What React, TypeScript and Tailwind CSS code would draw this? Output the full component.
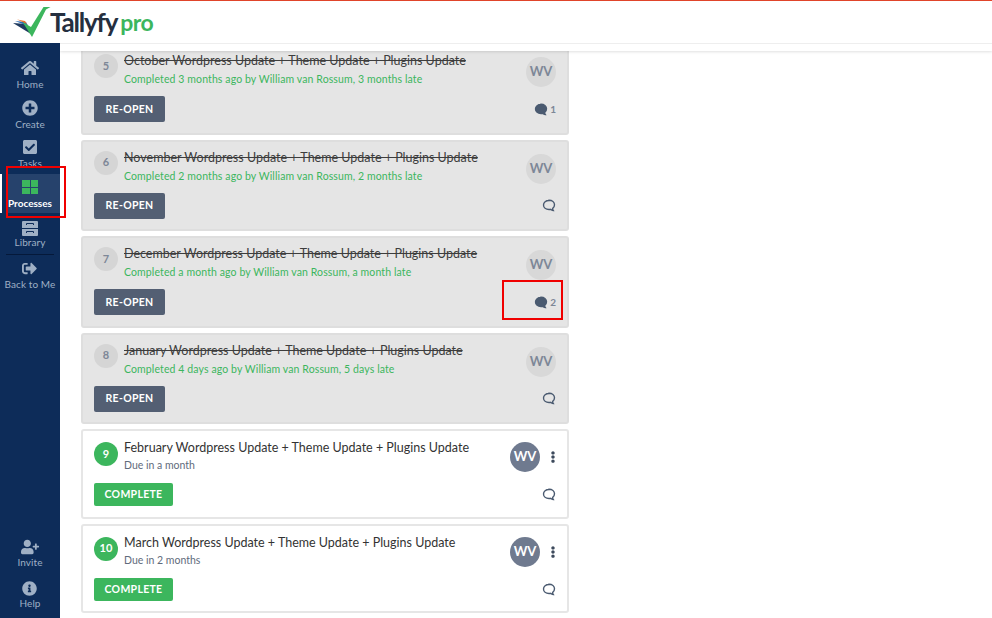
import React from 'react';
import { FaHome, FaPlusCircle, FaCheckSquare, FaSignOutAlt, FaUserPlus, FaInfoCircle, FaEllipsisV } from 'react-icons/fa';

interface Task {
  num: number;
  title: string;
  status: string;
  comments?: number;
}

const doneTasks: Task[] = [
  { num: 5, title: 'October Wordpress Update + Theme Update + Plugins Update', status: 'Completed 3 months ago by William van Rossum, 3 months late', comments: 1 },
  { num: 6, title: 'November Wordpress Update + Theme Update + Plugins Update', status: 'Completed 2 months ago by William van Rossum, 2 months late' },
  { num: 7, title: 'December Wordpress Update + Theme Update + Plugins Update', status: 'Completed a month ago by William van Rossum, a month late', comments: 2 },
  { num: 8, title: 'January Wordpress Update + Theme Update + Plugins Update', status: 'Completed 4 days ago by William van Rossum, 5 days late' },
];

const openTasks: Task[] = [
  { num: 9, title: 'February Wordpress Update + Theme Update + Plugins Update', status: 'Due in a month' },
  { num: 10, title: 'March Wordpress Update + Theme Update + Plugins Update', status: 'Due in 2 months' },
];

function Logo() {
  return (
    <svg width="40" height="34" viewBox="12 5 40 34" className="shrink-0">
      <path d="M13 23 L27 24 L31 34 Z" fill="#1f3a5f" />
      <path d="M15 21 L26 22 L28 26 Z" fill="#2d6cb5" />
      <path d="M17 19.500 L25 21 L27 24 Z" fill="#e8702a" />
      <path d="M22.500 22 L31 27 L43.500 7 L50.500 7 L46 9.500 L32 37 Z" fill="#3cb65d" />
    </svg>
  );
}

function CommentIcon({ filled }: { filled: boolean }) {
  return (
    <svg width="14" height="13" viewBox="0 0 14 13">
      <path
        d="M7 1.500C3.900 1.500 1.500 3.400 1.500 6s2.400 4.500 5.500 4.500c.8 0 1.200 0 1.700-.2.6.6 1.400 1.100 2.500 1.200-.4-.6-.6-1.300-.5-2.200 1.200-.8 1.800-2 1.800-3.500 0-2.600-2.400-4.500-5.500-4.500Z"
        fill={filled ? '#4a5a70' : 'none'}
        stroke="#4a5a70"
        strokeWidth="1.400"
      />
    </svg>
  );
}

function DoneCard({ task }: { task: Task }) {
  return (
    <div className="w-[488px] h-[91.5px] shrink-0 rounded-[3px] border-2 border-[#dedede] bg-[#e5e5e5] pl-[11px] pr-[11px] pt-[9px]">
      <div className="flex items-start">
        <div className="w-6 h-6 shrink-0 rounded-full bg-[#d5d5d5] text-[#7d8797] flex items-center justify-center text-[11px] font-bold">
          {task.num}
        </div>
        <div className="ml-[6px] flex-1 min-w-0 -mt-[1px]">
          <div className="text-[12.5px] leading-[16px] whitespace-nowrap text-[#3d3d3d] line-through">{task.title}</div>
          <div className="mt-[3px] text-[10.5px] leading-[14px] tracking-[0.11px] whitespace-nowrap text-[#3cb65d]">{task.status}</div>
        </div>
        <div className="mt-[3px] w-[30px] h-[30px] rounded-full bg-[#d8d8d8] text-[#7d8797] flex items-center justify-center text-[13px] font-bold">
          WV
        </div>
      </div>
      <div className="mt-[9px] flex items-center justify-between">
        <button className="w-[71px] h-[26px] pt-[1px] rounded-[2px] bg-[#535f73] text-white text-[10.5px] font-bold tracking-[0.3px]">RE-OPEN</button>
        <div className="flex items-center gap-[2px]">
          <CommentIcon filled={!!task.comments} />
          {task.comments ? <span className="text-[10px] font-bold text-[#7d8797]">{task.comments}</span> : null}
        </div>
      </div>
    </div>
  );
}

function OpenCard({ task }: { task: Task }) {
  return (
    <div className="w-[488px] h-[89.5px] shrink-0 rounded-[3px] border-2 border-[#e6e6e6] bg-white pl-[11px] pr-[11px] pt-[11px]">
      <div className="flex items-start">
        <div className="w-6 h-6 shrink-0 rounded-full bg-[#3cb65d] text-white flex items-center justify-center text-[11px] font-bold">
          {task.num}
        </div>
        <div className="ml-[6px] flex-1 min-w-0 -mt-[2px]">
          <div className="text-[12.5px] leading-[16px] whitespace-nowrap text-[#333]">{task.title}</div>
          <div className="mt-[2px] text-[10.5px] leading-[14px] whitespace-nowrap text-[#5f6b7c]">{task.status}</div>
        </div>
        <div className="flex items-center -mr-[3px]">
          <div className="w-[30px] h-[30px] rounded-full bg-[#6f7a8f] text-white flex items-center justify-center text-[13px] font-bold">
            WV
          </div>
          <FaEllipsisV className="ml-[7px] text-[#3d4a5c] text-[12px]" />
        </div>
      </div>
      <div className="mt-[11px] flex items-center justify-between">
        <button className="w-[79px] h-[23px] pt-[1px] rounded-[2px] bg-[#3cb65d] text-white text-[10.5px] font-bold tracking-[0.3px]">COMPLETE</button>
        <CommentIcon filled={false} />
      </div>
    </div>
  );
}

function NavItem({ icon, label, className, labelClass }: { icon: React.ReactNode; label: string; className?: string; labelClass?: string }) {
  return (
    <div className={`flex flex-col items-center text-[#9fb0c5] ${className ?? ''}`}>
      <div className="h-[18px] flex items-center justify-center">{icon}</div>
      <span className={`text-[10px] leading-[14px] tracking-[0.1px] whitespace-nowrap ${labelClass ?? ''}`}>{label}</span>
    </div>
  );
}

export default function App() {
  return (
    <div className="relative h-[618px] w-[992px] overflow-hidden bg-white font-['Lato','Noto_Sans',sans-serif] flex flex-col">
      <header className="h-[43px] shrink-0 bg-white border-t border-[#e0442a] flex items-center pl-3 z-10">
        <Logo />
        <span className="-ml-[2px] text-[26px] font-bold leading-none tracking-[-1.2px] text-[#252f3f]">Tallyfy</span>
        <span className="ml-[3px] text-[23px] font-bold leading-none tracking-[-0.5px] text-[#3cb65d]">pro</span>
      </header>
      <div className="flex flex-1 min-h-0">
        <aside className="w-[60px] shrink-0 bg-[#0d2c59] flex flex-col items-center pt-[16px] pb-[8px] z-20">
          <NavItem icon={<FaHome className="text-[18px]" />} label="Home" />
          <NavItem icon={<FaPlusCircle className="text-[16px]" />} label="Create" className="mt-[8px]" />
          <NavItem icon={<FaCheckSquare className="text-[16px]" />} label="Tasks" className="mt-[7px]" />
          <div className="relative mt-[4px] ml-[6px] pr-[6px] w-[54px] h-[39px] bg-[#26426c] flex flex-col items-center pt-[6px]">
            <span className="absolute -left-[6px] top-0 w-[2px] h-full bg-white" />
            <div className="grid grid-cols-2 gap-[1px] w-[16px]">
              <span className="h-[6.5px] bg-[#3cb65d]" />
              <span className="h-[6.5px] bg-[#3cb65d]" />
              <span className="h-[6.5px] bg-[#3cb65d]" />
              <span className="h-[6.5px] bg-[#3cb65d]" />
            </div>
            <span className="mt-[2px] text-[10px] leading-[14px] font-bold text-white">Processes</span>
          </div>
          <NavItem
            icon={
              <svg width="16" height="15" viewBox="0 0 16 15" fill="#9fb0c5">
                <path d="M0 1a1 1 0 0 1 1-1h14a1 1 0 0 1 1 1v6H0Z" />
                <path d="M0 8h16v6a1 1 0 0 1-1 1H1a1 1 0 0 1-1-1Z" />
                <path d="M4.500 4V2.500h7V4M4.500 12v-1.500h7V12" fill="none" stroke="#0d2c59" strokeWidth="1" />
              </svg>
            }
            label="Library"
            className="mt-[6px]"
            labelClass="-mt-[2px]"
          />
          <div className="w-[48px] h-[1px] bg-[#05193a] mt-[5px]" />
          <NavItem icon={<FaSignOutAlt className="text-[15px]" />} label="Back to Me" className="mt-[4px]" />
          <NavItem icon={<FaUserPlus className="text-[18px]" />} label="Invite" className="mt-auto" labelClass="-mt-[1px]" />
          <NavItem icon={<FaInfoCircle className="text-[15px]" />} label="Help" className="mt-[10px]" labelClass="-mt-[1px]" />
        </aside>
        <main className="relative flex-1 min-w-0 pl-[21px] flex flex-col gap-[5px]">
          <div className="absolute left-0 right-0 top-0 h-[8px] bg-white border-t border-[#eeeeee] shadow-[0_1px_3px_rgba(0,0,0,0.12)]" />
          {doneTasks.map((t) => (
            <DoneCard key={t.num} task={t} />
          ))}
          {openTasks.map((t) => (
            <OpenCard key={t.num} task={t} />
          ))}
        </main>
      </div>
      <div className="absolute left-[6px] top-[166px] w-[60px] h-[52px] border-[2px] border-[#f00000] z-30" />
      <div className="absolute left-[502px] top-[280px] w-[61px] h-[40px] border-[2px] border-[#f00000] z-30" />
    </div>
  );
}
